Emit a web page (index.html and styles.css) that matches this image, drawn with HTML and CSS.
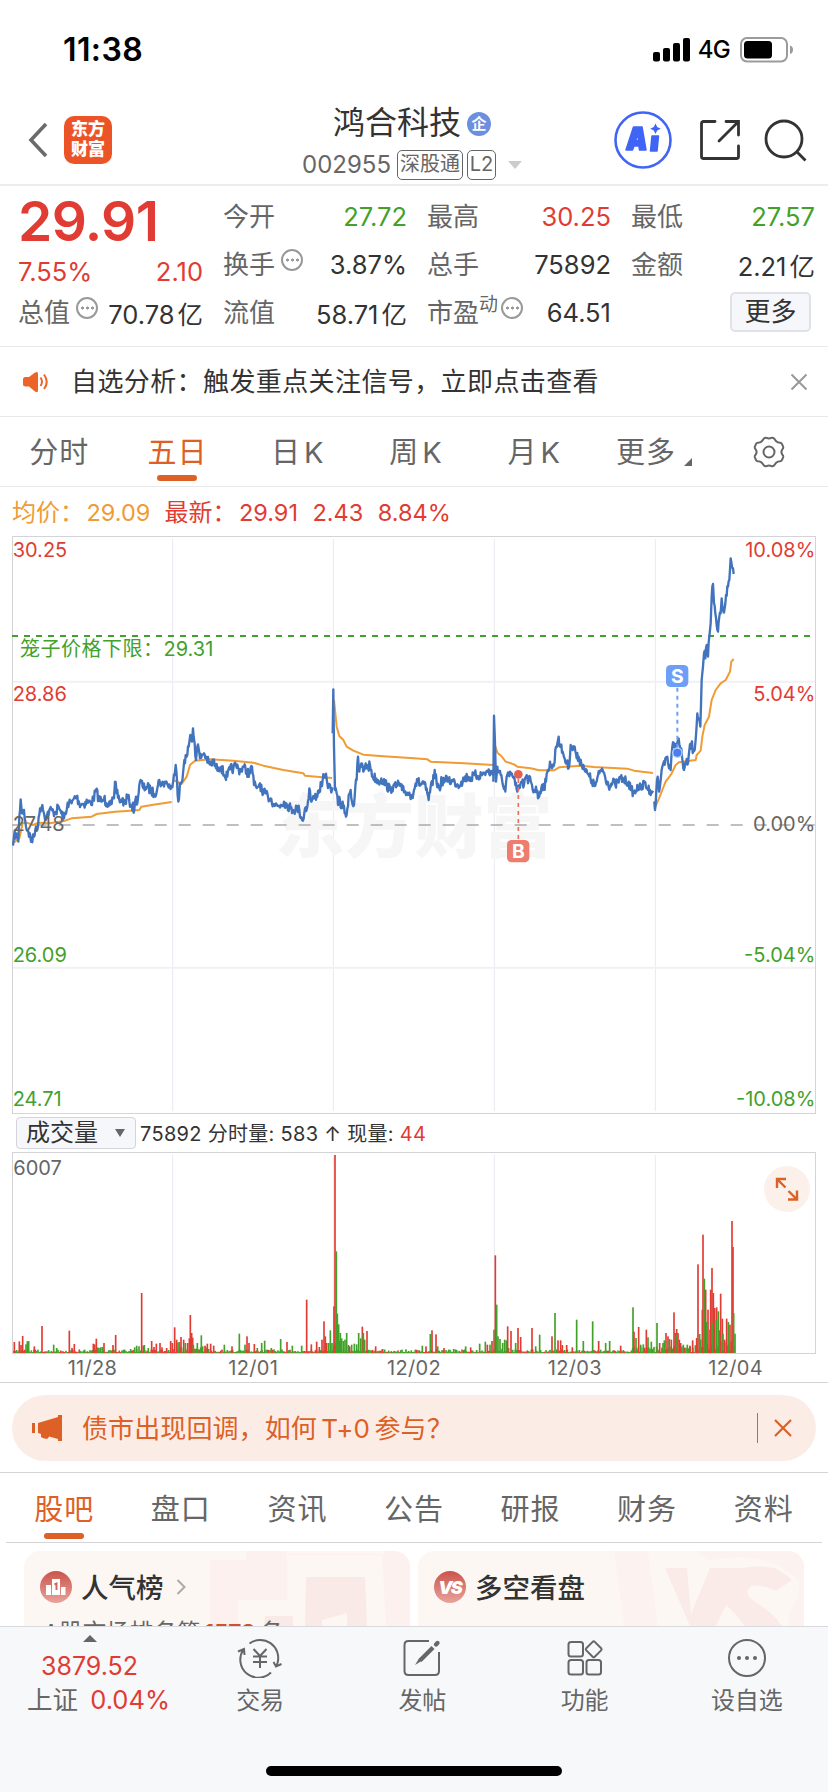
FILE: index.html
```html
<!doctype html>
<html lang="zh-CN">
<head>
<meta charset="utf-8">
<title>鸿合科技 002955</title>
<link rel="stylesheet" href="styles.css">
</head>

<body>
<div class="status">
	<span class="time">11:38</span>
	<div class="status_r">
		<svg class="signal" width="38" height="24" viewBox="0 0 38 24"><rect x="0" y="14" width="7" height="9.5" rx="2"/><rect x="10" y="10" width="7" height="13.5" rx="2"/><rect x="20" y="5" width="7" height="18.5" rx="2"/><rect x="30" y="0" width="7" height="23.5" rx="2"/></svg>
		<span class="net">4G</span>
		<svg width="54" height="26" viewBox="0 0 54 26"><rect x="1" y="1" width="46" height="23.5" rx="6" fill="none" stroke="#9b9b9b" stroke-width="2"/><rect x="4" y="4" width="28" height="17.5" rx="3.5"/><path d="M50 8.5c4 1 4 7.500 0 8.500z" fill="#9b9b9b"/></svg>
	</div>
</div>

<div class="header">
	<svg class="back" width="20" height="36" viewBox="0 0 20 36"><path d="M18 2L3 18l15 16" fill="none" stroke="#6b6b6b" stroke-width="3.600"/></svg>
	<div class="logo"><span>东方</span><span>财富</span></div>
	<div class="title">
		<div class="name">鸿合科技<i>企</i></div>
		<div class="code"><span>002955</span><b>深股通</b><b class="l2">L2</b><em></em></div>
	</div>
	<div class="tools">
		<svg width="58" height="58" viewBox="0 0 58 58"><circle cx="29" cy="29" r="27.500" fill="none" stroke="#4064f5" stroke-width="2.600"/><g fill="#4064f5" stroke="#4064f5" stroke-width="1.500" stroke-linejoin="round" fill-rule="evenodd"><path d="M12 39L19.500 16h8.500L32 39h-6.500l-.5-4h-5l-1.500 4zM21.500 29.500h3L24 23z"/><path d="M38 25h6.500L43 40h-6.500z"/></g><path d="M41.500 12.500l1.700 3.600 3.600 1.700-3.600 1.700-1.700 3.600-1.700-3.600-3.600-1.700 3.600-1.700z" fill="#4064f5"/></svg>
		<svg width="42" height="42" viewBox="0 0 42 42" fill="none" stroke="#333" stroke-width="2.800" stroke-linecap="round"><path d="M16 2.500H4.500a2 2 0 0 0-2 2v33a2 2 0 0 0 2 2h33a2 2 0 0 0 2-2V27"/><path d="M27 2.500h12.500V16M39 3L20 22"/></svg>
		<svg width="43" height="43" viewBox="0 0 43 43" fill="none" stroke="#333" stroke-width="2.800"><circle cx="20" cy="20" r="18"/><path d="M32.500 32.500l9 9"/></svg>
	</div>
</div>

<div class="quote">
	<div class="col col1">
		<strong>29.91</strong>
		<p class="red"><span>7.55%</span><span>2.10</span></p>
		<p><label>总值</label><i class="tip"></i><span>70.78<i>亿</i></span></p>
	</div>
	<div class="col">
		<p><label>今开</label><span class="green">27.72</span></p>
		<p><label>换手</label><i class="tip"></i><span>3.87%</span></p>
		<p><label>流值</label><span>58.71<i>亿</i></span></p>
	</div>
	<div class="col">
		<p><label>最高</label><span class="red">30.25</span></p>
		<p><label>总手</label><span>75892</span></p>
		<p><label>市盈<sup>动</sup></label><i class="tip tip2"></i><span>64.51</span></p>
	</div>
	<div class="col">
		<p><label>最低</label><span class="green">27.57</span></p>
		<p><label>金额</label><span>2.21<i>亿</i></span></p>
		<p><a class="more">更多</a></p>
	</div>
</div>

<div class="notice">
	<svg width="28" height="22" viewBox="0 0 28 22"><path d="M1 8.500q0-2.500 2.500-2.500h3.500L13 1.500q3-1.500 3 1v17q0 2.500-3 1L7 15.500H3.500Q1 15.500 1 13z" fill="#ec6428"/><path d="M18.500 6.500q3 4 0 8.500M22 3.500q5.500 7.500 0 14.500" fill="none" stroke="#ec6428" stroke-width="2"/></svg>
	<span>自选分析：触发重点关注信号，立即点击查看</span>
	<svg class="close" width="18" height="18" viewBox="0 0 18 18"><path d="M1.500 1.500l15 15M16.500 1.500l-15 15" stroke="#999" stroke-width="2"/></svg>
</div>

<ul class="tabs">
	<li>分时</li>
	<li class="active">五日</li>
	<li class="k">日 K</li>
	<li class="k">周 K</li>
	<li class="k">月 K</li>
	<li class="drop">更多<i></i></li>
	<li class="set"><svg width="34" height="32" viewBox="0 0 34 32" fill="none" stroke="#666" stroke-width="2"><path d="M12 2.500q1.200-1.200 2.600-.6 2.400 1.200 4.800 0 1.400-.6 2.600.6l2.200 2.800q1.400 1.500 4 1.500 1.500.2 2 1.600l1 2.600q.3 1.400-.8 2.300-2 2.700 0 5.400 1.100.9.800 2.300l-1 2.600q-.5 1.400-2 1.600-2.600 0-4 1.500l-2.200 2.800q-1.200 1.200-2.600.6-2.400-1.200-4.800 0-1.400.6-2.600-.6l-2.200-2.800q-1.400-1.500-4-1.500-1.500-.2-2-1.600l-1-2.600q-.3-1.400.8-2.300 2-2.700 0-5.400-1.100-.9-.8-2.300l1-2.600q.5-1.400 2-1.600 2.600 0 4-1.500z"/><circle cx="17" cy="16" r="5.500"/></svg></li>
</ul>

<div class="info">
	<span class="avg">均价：<em>29.09</em></span>
	<span class="red">最新：<em>29.91</em><em>2.43</em><em>8.84%</em></span>
</div>

<!-- 走势图，坐标为3倍像素 -->
<div class="chart">
	<svg width="804" height="578" viewBox="36 168 2412 1734">
		<g class="grid">
			<path d="M518 177v1716M1000 177v1716M1483 177v1716M1966 177v1716"/>
			<path class="h" d="M39 605h2407M39 1463h2407"/>
		</g>
		<rect class="frame" x="37.500" y="169.500" width="2409" height="1731"/>
		<text class="mark" x="826" y="1115">东方财富</text>
		<path class="limit" d="M36 468h2409"/>
		<path class="zero" d="M32 1035h2413"/>
		<g id="avg" class="line avg_line"></g>
		<g id="price" class="line price_line"></g>
		<g class="lab">
			<text class="r" x="38" y="231">30.25</text>
			<text class="r" x="38" y="663">28.86</text>
			<text x="38" y="1053">27.48</text>
			<text class="g" x="38" y="1445">26.09</text>
			<text class="g" x="38" y="1877">24.71</text>
			<text class="r end" x="2446" y="231">10.08%</text>
			<text class="r end" x="2446" y="663">5.04%</text>
			<text class="end" x="2446" y="1053">0.00%</text>
			<text class="g end" x="2446" y="1445">-5.04%</text>
			<text class="g end" x="2446" y="1877">-10.08%</text>
			<text class="g" x="60" y="528"><tspan class="cn">笼子价格下限：</tspan>29.31</text>
		</g>
		<path d="M1555 897v182" stroke="#ec705e" stroke-width="5" stroke-dasharray="12 12"/>
		<circle cx="1555" cy="883" r="13" fill="#e4604f"/>
		<rect x="1521" y="1080" width="67" height="67" rx="14" fill="#ee7d6d"/>
		<text class="bs" x="1555" y="1134">B</text>
		<path d="M2032 623v180" stroke="#6e9ff6" stroke-width="6" stroke-dasharray="12 12"/>
		<circle cx="2032" cy="818" r="14" fill="#4a80ee" stroke="#bcd1fb" stroke-width="4"/>
		<rect x="1998" y="555" width="67" height="66" rx="14" fill="#6e9ff6"/>
		<text class="bs" x="2032" y="609">S</text>
	</svg>
</div>

<div class="vol_bar">
	<div class="select">成交量<i></i></div>
	<p>75892 分时量: 583 ↑ 现量: <span class="red">44</span></p>
</div>
<div class="vol">
	<svg width="804" height="202" viewBox="36 216 2412 606">
		<path class="grid" d="M518 225v594M1000 225v594M1483 225v594M1966 225v594"/>
		<rect class="frame" x="37.500" y="217.500" width="2409" height="603"/>
		<g id="vol"></g>
		<text class="lab" x="40" y="285">6007</text>
	</svg>
	<a class="full"><svg width="24" height="24" viewBox="0 0 24 24" fill="none" stroke="#dd6126" stroke-width="2.400"><path d="M11 2H2v9M2.500 2.500l8 8M22 13.500V22.500H13M21.500 22l-8-8"/></svg></a>
</div>
<ul class="dates"><li>11/28</li><li>12/01</li><li>12/02</li><li>12/03</li><li>12/04</li></ul>

<div class="ad">
	<div class="ad_in">
		<svg width="32" height="28" viewBox="0 0 32 28" fill="#dd6126"><path d="M1 9h3v10H1zM7 9L27 3V1h4v26h-4v-2l-9-2.500-1 2q-3 .8-5-.5l-2-1v-3L7 19z"/></svg>
		<span>债市出现回调，如何 T+0 参与？</span>
		<i></i>
		<svg width="18" height="18" viewBox="0 0 18 18"><path d="M1 1l16 16M17 1L1 17" stroke="#dd6126" stroke-width="2.200"/></svg>
	</div>
</div>

<ul class="tabs tabs2">
	<li class="active">股吧</li>
	<li>盘口</li>
	<li>资讯</li>
	<li>公告</li>
	<li>研报</li>
	<li>财务</li>
	<li>资料</li>
</ul>

<div class="cards">
	<div class="card">
		<svg class="bg" width="200" height="76" viewBox="0 0 200 76"><path d="M0 9h36V0h40v4h98V0h26v76H176L172 3H77v46H28v27H0z" fill="#fcf1ef"/><path d="M96 26h59l2 50h-20V62l-25 7v7H95zM55 65h28v11H54z" fill="#f9e9e7"/></svg>
		<h3><svg width="32" height="32" viewBox="0 0 32 32"><defs><linearGradient id="rd" x2="0" y2="1"><stop offset="0" stop-color="#cb544b"/><stop offset="1" stop-color="#e8a39c"/></linearGradient></defs><circle cx="16" cy="16" r="16" fill="url(#rd)"/><path d="M6 14h5v10H6zM12 8h8v16h-8zM21 16h4.500v8H21z" fill="#fff"/><path d="M14.500 13.500l2-1V19" fill="none" stroke="#d3675f" stroke-width="2"/></svg><span>人气榜</span><svg class="arr" width="10" height="16" viewBox="0 0 10 16"><path d="M1.500 1L8.500 8l-7 7" fill="none" stroke="#aaa" stroke-width="2"/></svg></h3>
		<p>A股市场排名第<b>1573</b>名</p>
	</div>
	<div class="card">
		<svg class="bg" width="190" height="76" viewBox="0 0 190 76"><path d="M0 0h34l10 76H10zM82 0h108v76h-15V62q10-12 10-32Q150-4 95 10z" fill="#fcf2f0"/><path d="M51 17h22l4 46 19-46h32q16-3 32 0 10 4 18 12l-16 11q-12-7-24-5-9 5-1 13 26 16 31 28h-36q-12-15-20-22l-10 21H76z" fill="#faebe9"/></svg>
		<h3><svg width="32" height="32" viewBox="0 0 32 32"><circle cx="16" cy="16" r="16" fill="url(#rd)"/><text class="vs" x="15.500" y="23">VS</text></svg><span>多空看盘</span></h3>
	</div>
</div>

<div class="footer">
	<div class="index">
		<em></em>
		<span class="red">3879.52</span>
		<p>上证 <span class="red">0.04%</span></p>
	</div>
	<a><svg width="46" height="40" viewBox="0 0 46 40" fill="none" stroke="#666" stroke-width="2"><path d="M12.500 5.500A18 18 0 0 1 40.500 25l-1 3M34 34.500A18 18 0 0 1 6.500 11.500M1 13.500l6-2.500.500 6M36.500 24l2.500 4.500 5.500-2.500"/><path d="M16.500 11l6.500 7 6.500-7M23 18v12M16 18.500h14M16 24h14"/></svg>交易</a>
	<a><svg width="40" height="40" viewBox="0 0 40 40" fill="none" stroke="#666" stroke-width="2"><path d="M27 3H6.500Q2.500 3 2.500 7v26q0 4 4 4h26.500q4 0 4-4V14"/><path d="M31 9.500L18 22.500" stroke-width="4.200"/><path d="M17 20.500L13 27l6.500-4z" fill="#666" stroke="none"/><path d="M34 6.500l1.500-1.500" stroke-width="4.200" stroke-linecap="round"/></svg>发帖</a>
	<a><svg width="38" height="40" viewBox="0 0 38 40" fill="none" stroke="#666" stroke-width="2"><rect x="2.500" y="4" width="14.500" height="14.500" rx="2.500"/><rect x="2.500" y="22" width="14.500" height="14.500" rx="2.500"/><rect x="20.500" y="22" width="14.500" height="14.500" rx="2.500"/><rect x="-6" y="-6" width="12" height="12" rx="1.500" transform="translate(27.700 11.300) rotate(45)"/></svg>功能</a>
	<a><svg width="40" height="40" viewBox="0 0 40 40"><circle cx="20" cy="20" r="18" fill="none" stroke="#666" stroke-width="2"/><g fill="#666"><circle cx="12" cy="20" r="2"/><circle cx="20" cy="20" r="2"/><circle cx="28" cy="20" r="2"/></g></svg>设自选</a>
	<div class="home"></div>
</div>
<script src="chart.js"></script>
</body>
</html>
```

FILE: styles.css
```css
*{ margin:0; padding:0; list-style:none; box-sizing:border-box;}
body{ width:828px; height:1792px; overflow:hidden; background:#fff; color:#333; font-family:Inter,"Noto Sans CJK SC",sans-serif; font-size:26px;}
i,em{ font-style:normal;}
svg{ display:block; flex:none;}
.red{ color:#e03c34;}
.green{ color:#42a12a;}

/* 状态栏 */
.status{ height:96px; padding:0 34px 0 63px; display:flex; justify-content:space-between; align-items:center; color:#000;}
.time{ font-size:32px; font-weight:600; padding-top:3px; letter-spacing:.4px;}
.status_r{ display:flex; align-items:center; padding-top:3px;}
.net{ font-size:24px; font-weight:500; margin:0 10px 0 7px; letter-spacing:-.7px;}

/* 头部 */
.header{ height:90px; border-bottom:2px solid #ededed; display:flex; align-items:center; padding:0 21px 0 28px;}
.logo{ width:48px; height:48px; border-radius:10px; background:#ec5428; color:#fff; margin-left:16px; font-size:17px; font-weight:900; line-height:20px; text-align:center; padding-top:3px;}
.logo span{ display:block;}
.title{ flex:1; padding-left:190px; padding-top:5px;}
.name{ display:flex; align-items:center; font-size:32px; line-height:40px; padding-left:31px; margin-top:-2px;}
.name i{ width:24px; height:24px; border-radius:50%; background:#6d8fe0; color:#fff; font-size:15px; font-weight:700; line-height:23px; text-align:center; margin-left:6px; margin-top:2px;}
.code{ display:flex; align-items:center; font-size:24px; line-height:30px; color:#666; margin-top:7px; height:30px;}
.code b{ border:1px solid #666; border-radius:5px; height:30px; line-height:27px; font-size:20px; font-weight:400; padding:0 2px; margin-left:4px;}
.code span{ margin-right:4px; width:87px;}
.code .l2{ width:29px; padding:0; text-align:center;}
.code em{ border:7px solid transparent; border-top:8px solid #ccc; border-bottom:0; margin-left:12px;}
.tools{ display:flex; align-items:center; gap:27px;}
.tools svg:last-child{ margin-left:-4px;}

/* 行情 */
.quote{ height:161px; padding:6px 13px 0 18px; display:flex; gap:20px; border-bottom:1px solid #e9e9ec;}
.col{ width:184px;}
.col1{ width:185px;}
.col p{ height:48px; display:flex; align-items:center; white-space:nowrap;}
.col p>span{ margin-left:auto; font-size:25.500px;}
.col span i{ margin-left:3px;}
.col .red span:first-child{ margin-left:0;}
.col label{ color:#666; font-size:26px; position:relative; padding-bottom:3px;}
.col1 strong{ display:block; height:53px; line-height:58px; font-size:55px; font-weight:600; letter-spacing:-.600px; color:#e03c34;}
.col1 p:nth-child(2){ height:43px; padding-top:9px;}
.tip{ width:22px; height:22px; border:2px solid #999; border-radius:50%; margin:-9px 0 0 6px; background:radial-gradient(circle,#999 1.3px,transparent 1.800px) center/5px 18px no-repeat,radial-gradient(circle,#999 1.300px,transparent 1.800px) 1.500px center/5px 18px no-repeat,radial-gradient(circle,#999 1.300px,transparent 1.800px) 11.500px center/5px 18px no-repeat;}
.tip2{ margin-left:22px;}
.col sup{ position:absolute; left:52px; top:-3px; font-size:19px;}
.more{ width:81px; height:40px; line-height:36px; border:2px solid #e1e2e8; border-radius:5px; background:#f6f7fa; margin-left:auto; margin-right:4px; text-align:center;}

.notice{ height:70px; border-bottom:1px solid #e9e9ec; display:flex; align-items:center; padding:0 20px 0 22px;}
.notice span{ flex:1; margin-left:21px; padding-bottom:4px; font-size:26px; letter-spacing:.4px;}

.tabs{ display:flex; height:70px; border-bottom:1px solid #e9e9ec;}
.tabs li{ width:14.2857%; display:flex; justify-content:center; align-items:center; font-size:29px; color:#666; position:relative; letter-spacing:1px; padding-bottom:4px;}
.tabs .k{ word-spacing:-6px; padding-left:4px;}
.tabs .drop{ padding-right:9px;}
.tabs .set{ padding-bottom:0;}
.tabs .active{ color:#dd6126;}
.tabs .active:after{ content:""; position:absolute; width:40px; height:6px; border-radius:3px; background:#dd6126; left:50%; margin-left:-20px; bottom:5px;}
.tabs i{ position:absolute; right:18px; bottom:20px; border:4.500px solid #666; border-top-color:transparent; border-left-color:transparent;}

.info{ height:49px; padding:0 0 3px 12px; display:flex; align-items:center; gap:14px; font-size:24px;}
.avg{ color:#f09b33;}
.info em{ margin-right:14.500px; font-size:23.500px;}
.info em:first-child{ margin-left:2.500px;}
.avg em{ margin-right:0;}

/* 走势图 */
.frame{ fill:none; stroke:#d3d3d8; stroke-width:3;}
.grid{ fill:none; stroke:#e9e9f0; stroke-width:3;}
.grid .h{ stroke:#f1f1f5; stroke-width:6;}
.mark{ font-size:208px; font-weight:900; fill:#f6f6f7;}
.limit{ stroke:#42a12a; stroke-width:6; stroke-dasharray:18 18;}
.zero{ stroke:#aaa; stroke-width:5; stroke-dasharray:36 36;}
.line{ fill:none; stroke-linejoin:round;}
.avg_line{ stroke:#f09b33; stroke-width:6;}
.price_line{ stroke:#4273bd; stroke-width:7;}
.lab{ font-size:60px; fill:#666;}
.lab .r{ fill:#e03c34;}
.lab .g{ fill:#42a12a;}
.lab .end{ text-anchor:end;}
.lab .cn{ letter-spacing:1.500px;}
.bs{ font-size:58px; font-weight:700; fill:#fff; text-anchor:middle;}

.vol_bar{ height:38px; display:flex; align-items:center; padding-left:16px; font-size:20px;}
.select{ width:120px; height:32px; line-height:29px; border:1px solid #d3d4dc; border-radius:4px; background:#f6f7fa; font-size:24px; padding-left:9px; position:relative;}
.select i{ position:absolute; right:10px; top:11px; border:5px solid transparent; border-top:8px solid #666; border-bottom:0;}
.vol_bar p{ margin-left:4px; padding-bottom:2px; letter-spacing:.3px;}
.chart,.vol{ margin:0 12px; position:relative;}
.full{ position:absolute; right:6px; top:14px; width:46px; height:46px; border-radius:50%; background:#fcf0ea; display:flex; align-items:center; justify-content:center;}
.dates{ height:29px; padding:0 12px; display:flex; border-bottom:1px solid #d3d3d8; font-size:20px; line-height:29px; color:#666; letter-spacing:.3px;}
.dates li{ flex:1; text-align:center;}

.ad{ height:90px; padding:12px; border-bottom:1px solid #d3d3d8;}
.ad_in{ height:66px; border-radius:33px; background:#fbede5; display:flex; align-items:center; padding:0 24px 0 19px; color:#dd6126;}
.ad_in span{ flex:1; margin-left:19px; padding-bottom:4px; word-spacing:-3px; letter-spacing:.1px;}
.ad_in i{ width:1px; height:30px; background:#dd6126; margin-right:16px;}

.tabs2{ margin:0 6px; border-color:#d3d3d8;}
.tabs2 li{ padding-bottom:2px;}
.tabs2 .active:after{ bottom:3px;}

.cards{ height:83px; padding:8px 24px 0; display:flex; gap:8px; overflow:hidden;}
.card{ width:386px; height:140px; border-radius:16px; background:#fdf7f4; padding:20px 16px; position:relative; overflow:hidden; flex:none;}
.card .bg{ position:absolute; right:0; top:0;}
.card h3{ display:flex; align-items:center; height:32px; gap:9px; font-size:27.500px; font-weight:500; position:relative;}
.card h3 span{ padding-bottom:3px;}
.card .arr{ margin-left:3px;}
.card p{ font-size:23.500px; color:#666; margin-top:12px; padding-left:3px; line-height:35px; position:relative;}
.card b{ color:#d4502a; margin:0 4px; font-size:22.500px;}
.vs{ font-size:18px; font-weight:900; font-style:italic; fill:#fff; text-anchor:middle; letter-spacing:-2px;}

/* 底部 */
.footer{ height:166px; background:#f7f8fa; border-top:1px solid #d9dade; display:flex; position:relative; color:#666;}
.index{ width:179px; padding-top:8px;}
.index em{ display:block; width:14px; margin-left:83px; border:7px solid transparent; border-bottom:7px solid #666; border-top:0;}
.index span{ font-size:25px;}
.index>span{ display:block; margin-left:41px; line-height:34px; padding-top:7px;}
.index p{ margin-left:27px; line-height:34px; font-size:25.500px; white-space:nowrap;}
.index p span{ font-size:25.500px; margin-left:5px;}
.footer a{ flex:1; display:flex; flex-direction:column; align-items:center; padding-top:11px; font-size:24px; line-height:46px;}
.home{ position:absolute; left:266px; bottom:16px; width:296px; height:10px; border-radius:5px; background:#000;}
```

FILE: chart.js
```javascript
//伪随机
var seed=7;
function rnd(){
	seed=(seed*16807)%2147483647;
	return seed/2147483647;
}

//五日价格，每天一组
var price=[
	'39,1097 42,1070 48,1060 55,1085 58,1010 62,958 66,1000 72,990 78,1040 85,1055 95,1085 102,1070 108,1040 114,1040 120,985 127,975 133,1005 140,1010 148,990 160,995 168,995 176,980 184,1000 192,1015 200,990 203,968 215,970 222,955 230,950 238,970 250,972 262,965 272,968 280,960 288,930 296,955 305,965 312,955 320,970 328,965 335,972 342,955 345,905 350,940 358,960 366,960 374,970 382,950 388,965 395,975 403,990 408,950 412,970 418,915 424,905 430,925 440,920 452,930 462,942 472,925 478,900 486,915 495,905 502,912 510,920 517,922 520,900 524,885 527,855 531,900 535,965 540,910 545,905 550,870 553,840 560,830 566,800 571,765 576,785 579,745 584,790 588,840 592,800 596,805 600,835 606,825 612,820 618,830 626,850 634,855 640,840 648,865 656,862 664,860 672,885 682,890 690,868 700,865 708,855 716,868 724,870 730,860 740,875 750,880 756,860 762,915 768,920 775,920 780,910 788,945 796,940 804,950 812,955 822,972 834,978 842,975 852,965 862,975 872,985 880,990 890,985 898,990 904,1012 909,1022 915,985 922,980 928,925 934,965 942,955 950,945 958,930 968,900 974,893 980,897 986,920 992,925 998,922',
	'998,760 1000,628 1002,800 1005,930 1010,940 1014,975 1020,960 1024,985 1028,965 1034,1000 1038,1010 1042,985 1046,945 1052,930 1056,965 1062,975 1066,920 1070,900 1074,830 1078,875 1084,850 1090,875 1097,850 1102,865 1110,855 1118,890 1128,895 1136,905 1144,895 1150,905 1160,915 1170,930 1180,918 1188,922 1196,910 1206,930 1216,935 1226,940 1236,945 1242,930 1247,910 1254,905 1262,915 1270,905 1278,930 1286,960 1292,920 1298,915 1304,870 1310,910 1318,925 1326,900 1334,905 1344,895 1354,905 1364,905 1374,915 1384,905 1394,895 1404,890 1414,895 1424,885 1434,888 1444,885 1454,878 1464,875 1474,880 1480,880',
	'1480,905 1482,707 1485,790 1488,905 1492,860 1498,875 1504,885 1510,920 1516,935 1522,885 1530,875 1538,890 1546,915 1552,935 1558,925 1564,905 1572,915 1578,890 1584,910 1590,890 1596,915 1602,935 1608,920 1614,955 1620,935 1626,915 1632,920 1638,905 1644,870 1650,845 1656,865 1662,855 1668,800 1676,770 1680,800 1688,815 1694,835 1700,850 1706,865 1712,795 1718,810 1724,800 1730,835 1736,830 1744,850 1750,855 1756,875 1762,880 1768,890 1776,905 1784,918 1790,905 1798,880 1806,865 1814,885 1822,905 1830,918 1838,908 1846,915 1854,905 1862,895 1870,900 1878,905 1886,905 1892,930 1900,935 1906,940 1912,915 1918,925 1926,925 1934,905 1942,925 1950,930 1959,932',
	'1961,965 1965,990 1969,930 1973,890 1977,935 1982,900 1985,870 1990,850 1996,835 2002,830 2007,865 2012,870 2017,800 2022,790 2028,800 2034,780 2040,800 2046,830 2052,870 2058,850 2064,850 2068,810 2074,790 2080,815 2086,790 2092,700 2096,715 2101,740 2105,600 2109,560 2112,520 2116,535 2120,495 2124,530 2128,470 2132,430 2135,350 2139,312 2142,370 2146,400 2150,435 2154,455 2158,410 2162,400 2165,355 2170,395 2174,385 2178,345 2184,320 2188,300 2192,235 2196,262 2199,265 2201,282'
];

//均价
var avg=[
	'39,1090 58,1075 68,1030 80,1028 100,1035 115,1028 150,1030 195,1022 215,1015 275,1010 290,1002 345,995 380,993 418,990 424,980 460,974 515,966',
	'520,900 545,912 560,890 570,855 585,842 630,838 700,842 760,848 790,857 850,870 910,880 915,887 950,890 996,894',
	'1002,660 1010,740 1018,768 1030,780 1040,800 1060,812 1090,824 1150,829 1242,835 1282,838 1292,845 1392,850 1480,855',
	'1486,800 1492,818 1504,828 1517,845 1542,853 1552,860 1592,865 1617,871 1662,871 1677,862 1742,857 1782,861 1882,866 1902,872 1959,879',
	'1964,985 1977,955 1987,930 1997,905 2014,882 2027,855 2037,847 2087,840 2090,825 2102,812 2107,770 2114,735 2127,710 2135,660 2147,630 2162,610 2177,600 2190,575 2194,545 2201,537'
];

function parse(str){
	return str.split(' ').map(function(s){
		var a=s.split(',');
		return [+a[0],+a[1],a[2]];
	});
}

//关键点之间按分钟补点
function fill(pts){
	var out=[];
	for(var i=0; i<pts.length-1; i++){
		var a=pts[i],b=pts[i+1];
		out.push(a[0]+','+a[1]);
		for(var x=a[0]+2; x<b[0]-1; x+=2){
			var y=a[1]+(b[1]-a[1])*(x-a[0])/(b[0]-a[0])+(rnd()-0.5)*30;
			out.push(x+','+y.toFixed(1));
		}
	}
	out.push(pts[i][0]+','+pts[i][1]);
	return out.join(' ');
}

document.getElementById('price').innerHTML=price.map(function(s){
	return '<polyline points="'+fill(parse(s))+'"/>';
}).join('');
document.getElementById('avg').innerHTML=avg.map(function(s){
	return '<polyline points="'+s+'"/>';
}).join('');

//成交量 x,高度,涨跌
var vol='43,33,r 58,35,r 63,24,r 68,51,r 82,35,g 86,36,g 78,26,g 103,20,r 126,81,r 161,25,g 170,15,g 208,67,r 216,15,r 223,27,r 280,28,r 284,26,r 289,43,r 293,17,g 297,15,g 302,17,g 307,18,g 312,30,r 339,24,r 347,54,r 392,12,g 404,17,g 410,22,g 417,20,g 425,180,r 430,22,r 433,24,g 445,15,g 455,36,r 462,18,r 469,28,r 480,30,r 486,17,r 500,15,r 512,36,r 517,30,r 524,77,r 530,40,r 534,32,g 538,33,g 543,48,r 551,40,r 556,30,g 563,30,r 568,44,r 571,114,r 575,60,r 578,46,r 580,25,g 592,30,g 604,53,g 608,20,g 615,22,r 622,28,r 632,28,r 641,22,r 673,25,g 696,20,r 718,58,g 735,25,g 741,50,r 747,30,r 763,27,r 772,15,g 785,30,g 794,37,g 814,15,g 842,42,g 861,33,r 877,22,g 905,22,g 920,160,r 934,26,r 950,34,r 958,18,r 966,40,r 972,95,r 976,50,r 980,30,r 986,30,g 991,68,g 996,30,g 1002,140,r 1005,594,r 1009,305,g 1012,118,g 1016,86,g 1021,60,g 1025,44,g 1030,36,g 1035,40,g 1040,60,g 1045,24,g 1049,20,r 1055,25,g 1063,28,g 1070,26,g 1076,60,g 1082,44,g 1087,79,r 1090,60,g 1094,40,g 1101,66,r 1127,20,r 1148,12,r 1267,22,g 1278,20,r 1291,57,g 1296,68,r 1308,56,r 1313,20,g 1332,15,r 1361,12,g 1397,20,g 1412,17,r 1439,28,g 1456,34,g 1462,25,r 1470,25,g 1476,36,r 1482,70,g 1486,293,r 1490,145,g 1494,50,g 1500,42,g 1508,30,g 1514,40,g 1519,38,g 1523,80,r 1533,66,r 1547,30,g 1554,75,r 1562,48,r 1596,75,r 1607,20,g 1619,55,g 1656,50,r 1665,120,g 1674,38,r 1682,38,r 1687,24,r 1700,24,r 1717,17,r 1730,100,g 1750,36,g 1778,95,g 1796,36,r 1817,30,g 1829,36,g 1862,22,r 1899,137,g 1902,64,r 1908,45,g 1916,78,r 1922,25,g 1930,26,g 1939,70,r 1944,47,g 1954,34,g 1971,90,g 1979,30,r 1989,30,g 1993,38,g 1998,60,r 2004,50,r 2008,42,g 2014,40,r 2022,122,r 2026,60,r 2030,72,r 2034,60,r 2038,40,r 2028,55,g 2042,30,r 2050,25,g 2062,25,g 2070,22,r 2078,38,r 2090,45,r 2094,266,r 2099,57,g 2107,130,r 2109,355,r 2113,223,g 2117,190,r 2120,93,g 2124,130,r 2130,70,r 2132,190,r 2136,255,r 2140,180,r 2144,135,r 2138,88,g 2150,137,r 2149,100,g 2155,125,g 2159,68,g 2162,178,r 2167,103,r 2169,58,g 2174,40,r 2180,103,r 2185,93,g 2190,85,r 2196,396,r 2199,318,r 2201,120,g 2205,58,g';
var html='';
function bar(x,h,c){
	html+='<rect x="'+(x-2.5)+'" y="'+(819-h).toFixed(1)+'" width="5" height="'+h.toFixed(1)+'" fill="'+(c=='r'?'#e03c34':'#42a12a')+'"/>';
}
for(var x=42; x<2206; x+=4){
	//放量时段底量更高
	var k=(x>2085||(x>1000&&x<1030))?40:((x>520&&x<640)||(x>1890&&x<2085)||(x>1470&&x<1530)?17:8);
	bar(x,3+Math.pow(rnd(),1.6)*k,rnd()<0.35?'r':'g');
}
parse(vol).forEach(function(v){
	bar(v[0],v[1],v[2]);
});
document.getElementById('vol').innerHTML=html;
```
